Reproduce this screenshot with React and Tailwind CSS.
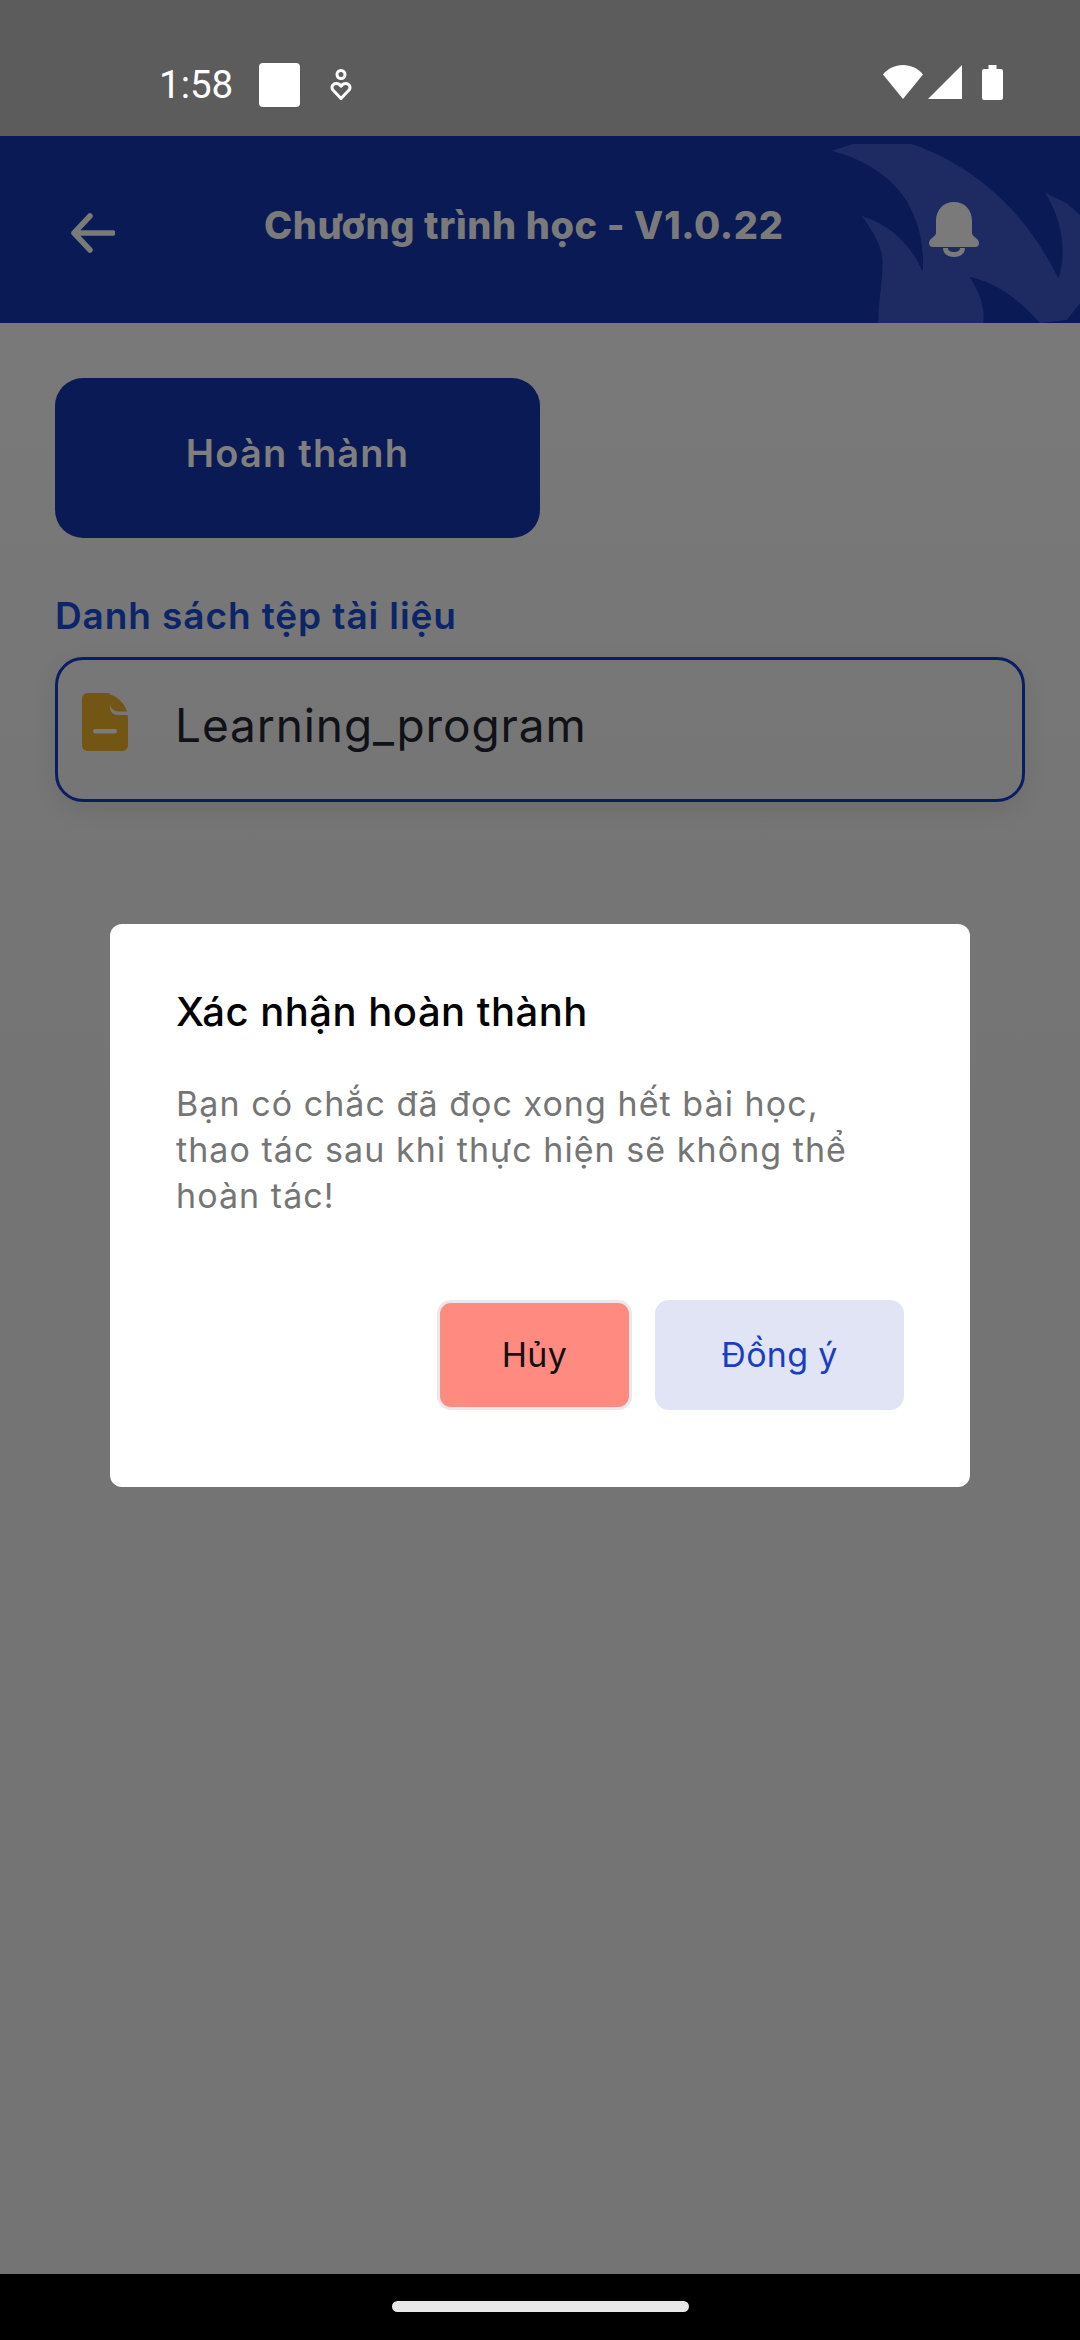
const FONT = "font-['Inter','Noto_Sans',sans-serif]";

function StatusBar() {
  return (
    <div className="flex h-[136px] shrink-0 items-start justify-between bg-[#5c5c5c] pl-[159px] pr-[77px] pt-[63px] text-white">
      <div className="flex items-center">
        <span className="w-[100px] font-['Roboto',sans-serif] text-[38.5px] leading-[44px]">1:58</span>
        <div className="h-[44px] w-[41px] rounded-[4px] bg-white" />
        <svg className="ml-[30px]" width="22" height="32" viewBox="0 0 22 32" fill="none" stroke="white" strokeWidth="3">
          <circle cx="11" cy="5.5" r="4" />
          <path d="M11 29.5 2.5 20.5c-1.5-3.5 1-6 3.8-6 2 0 3.5 1 4.7 2.7 1.2-1.7 2.7-2.7 4.7-2.7 2.8 0 5.3 2.500 3.800 6Z" strokeLinejoin="round" />
        </svg>
      </div>
      <div className="flex items-start pt-[2px]">
        <svg width="40" height="34" viewBox="0 0 40 34" fill="white">
          <path d="M20 34 0 9.500C5 3.500 12 0 20 0s15 3.500 20 9.500Z" />
        </svg>
        <svg className="ml-[5px]" width="34" height="34" viewBox="0 0 34 34" fill="white">
          <path d="M34 0v34H0Z" />
        </svg>
        <svg className="ml-[20px]" width="21" height="35" viewBox="0 0 21 35" fill="white">
          <path d="M6.500 0h8v4H19a2 2 0 0 1 2 2v27a2 2 0 0 1-2 2H2a2 2 0 0 1-2-2V6a2 2 0 0 1 2-2h4.500Z" />
        </svg>
      </div>
    </div>
  );
}

function Header() {
  return (
    <div className="relative flex h-[187px] shrink-0 items-center overflow-hidden bg-[#0a1a55] pl-[71px] pr-[101px]">
      <svg className="absolute right-0 top-0" width="270" height="187" viewBox="0 0 810 561" fill="white" fillOpacity="0.08">
        <path d="M65 44 130 24H305C500 92 650 232 745 427 770 362 760 252 705 170L770 202 810 237V502L770 552 690 561C620 482 550 437 478 422 510 472 525 512 520 561H205C205 482 225 402 215 352 205 302 155 240 155 240 240 267 300 322 338 407 345 302 320 112 65 44Z" />
      </svg>
      <svg className="relative mt-[6px]" width="44" height="40" viewBox="0 0 44 40" fill="none" stroke="#7a7a7a" strokeWidth="5.500" strokeLinecap="round" strokeLinejoin="round">
        <path d="M42 20H3M19 3 3 20l16 17" />
      </svg>
      <div className={`relative flex-1 pb-[10px] pl-[149px] text-[38px] font-extrabold leading-[44px] tracking-[0.6px] text-[#7a7a7a] ${FONT}`}>
        Chương trình học - V1.0.22
      </div>
      <svg className="relative" width="50" height="55" viewBox="0 0 50 55" fill="#7a7a7a">
        <path d="M25 0c-11 0-18 8-18 19v12c0 4-7 5-7 10 0 3 2 4 4 4h42c2 0 4-1 4-4 0-5-7-6-7-10V19C43 8 36 0 25 0Z" />
        <path d="M14 46c0 6 5 9 11 9s11-3 11-9h-5c0 3-3 4-6 4s-6-1-6-4Z" />
      </svg>
    </div>
  );
}

function FileCard() {
  return (
    <div className="flex h-[145px] items-center rounded-[28px] border-[3px] border-[#0a1d63] pb-[6px] pl-[24px] shadow-[0_8px_24px_rgba(0,0,0,0.08)]">
      <svg className="mb-[10px] shrink-0" width="46" height="58" viewBox="0 0 46 58" fill="#735614">
        <path d="M6 0h20c1.500 0 2 1 2 2v12c0 5 3 8 8 8h8c1.500 0 2 .5 2 2v28c0 3.500-2.500 6-6 6H6c-3.500 0-6-2.500-6-6V6c0-3.500 2.500-6 6-6Z" />
        <path d="M28 1.500C36 4 42 10 45 18.500H37C32 18.500 28 15 28 10Z" />
        <rect x="11" y="36" width="24" height="4.500" rx="2.200" fill="#7b7b7b" />
      </svg>
      <span className={`mb-[3px] ml-[47px] text-[46px] leading-none tracking-[0.9px] text-[#111118] ${FONT}`}>
        Learning_program
      </span>
    </div>
  );
}

function ConfirmDialog() {
  return (
    <div className="absolute inset-0 flex items-center justify-center">
      <div className={`w-[860px] rounded-[12px] bg-white pb-[77px] pl-[66px] pr-[66px] pt-[62px] ${FONT}`}>
        <h2 className="text-[40px] font-medium leading-[52px] tracking-[0.5px] text-black">Xác nhận hoàn thành</h2>
        <p className="mt-[43px] w-[700px] text-[34px] leading-[46px] tracking-[1.05px] text-[#757575]">
          Bạn có chắc đã đọc xong hết bài học, thao tác sau khi thực hiện sẽ không thể hoàn tác!
        </p>
        <div className="mt-[81px] flex justify-end gap-[23px]">
          <button className="h-[110px] w-[195px] rounded-[14px] border-[3px] border-[#e8e8ee] bg-[#ff8a80] text-[34px] tracking-[0.3px] text-[#111]">
            Hủy
          </button>
          <button className="h-[110px] w-[249px] rounded-[14px] bg-[#e0e4f4] text-[34px] tracking-[0.3px] text-[#1a3ebd]">
            Đồng ý
          </button>
        </div>
      </div>
    </div>
  );
}

export default function App() {
  return (
    <div className="flex h-[2340px] w-[1080px] flex-col overflow-hidden bg-[#747474]">
      <StatusBar />
      <div className="relative flex flex-1 flex-col">
        <Header />
        <div className="flex-1 bg-linear-to-b from-[#797979] to-[#747474] to-40% px-[55px] pt-[55px]">
          <button className={`h-[160px] w-[485px] rounded-[28px] bg-[#0a1a55] pb-[10px] text-[38px] font-semibold tracking-[1.2px] text-[#7f7f7f] ${FONT}`}>
            Hoàn thành
          </button>
          <div className={`mb-[19px] mt-[56px] text-[37px] font-semibold leading-[44px] tracking-[0.9px] text-[#0c2468] ${FONT}`}>
            Danh sách tệp tài liệu
          </div>
          <FileCard />
        </div>
        <ConfirmDialog />
      </div>
      <div className="flex h-[66px] shrink-0 items-start justify-center bg-black pt-[27px]">
        <div className="h-[11px] w-[297px] rounded-full bg-[#e8e8e8]" />
      </div>
    </div>
  );
}
